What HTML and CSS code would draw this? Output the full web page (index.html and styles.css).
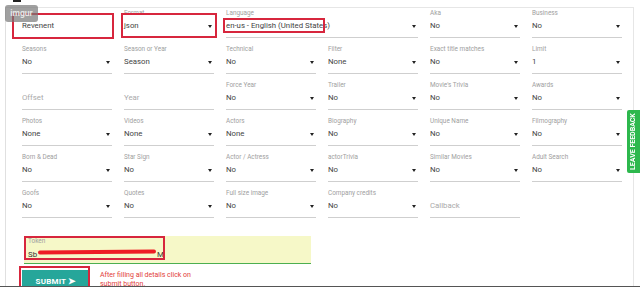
FILE: index.html
```html
<!DOCTYPE html>
<html lang="en">
<head>
    <meta charset="UTF-8">
    <meta name="viewport" content="width=device-width, initial-scale=1.0">
    <title>Movie API Form</title>
    <link rel="stylesheet" href="styles.css">
</head>
<body>
    <div class="topstub"></div>
    <div class="watermark">imgur</div>
    <div class="card">
        <div class="grid">
            <div class="field active"><label></label><div class="input">Revenent</div><span class="mark mark-title"></span></div>
            <div class="field"><label>Format</label><div class="input select">json<i></i></div><span class="mark mark-format"></span></div>
            <div class="field wide"><label>Language</label><div class="input select">en-us - English (United States)<i></i></div><span class="mark mark-lang"></span></div>
            <div class="field"><label>Aka</label><div class="input select">No<i></i></div></div>
            <div class="field"><label>Business</label><div class="input select">No<i></i></div></div>

            <div class="field"><label>Seasons</label><div class="input select">No<i></i></div></div>
            <div class="field"><label>Season or Year</label><div class="input select">Season<i></i></div></div>
            <div class="field"><label>Technical</label><div class="input select">No<i></i></div></div>
            <div class="field"><label>Filter</label><div class="input select">None<i></i></div></div>
            <div class="field"><label>Exact title matches</label><div class="input select">No<i></i></div></div>
            <div class="field"><label>Limit</label><div class="input select">1<i></i></div></div>

            <div class="field"><label></label><div class="input empty">Offset</div></div>
            <div class="field"><label></label><div class="input empty">Year</div></div>
            <div class="field"><label>Force Year</label><div class="input select">No<i></i></div></div>
            <div class="field"><label>Trailer</label><div class="input select">No<i></i></div></div>
            <div class="field"><label>Movie's Trivia</label><div class="input select">No<i></i></div></div>
            <div class="field"><label>Awards</label><div class="input select">No<i></i></div></div>

            <div class="field"><label>Photos</label><div class="input select">None<i></i></div></div>
            <div class="field"><label>Videos</label><div class="input select">None<i></i></div></div>
            <div class="field"><label>Actors</label><div class="input select">None<i></i></div></div>
            <div class="field"><label>Biography</label><div class="input select">No<i></i></div></div>
            <div class="field"><label>Unique Name</label><div class="input select">No<i></i></div></div>
            <div class="field"><label>Filmography</label><div class="input select">No<i></i></div></div>

            <div class="field"><label>Born &amp; Dead</label><div class="input select">No<i></i></div></div>
            <div class="field"><label>Star Sign</label><div class="input select">No<i></i></div></div>
            <div class="field"><label>Actor / Actress</label><div class="input select">No<i></i></div></div>
            <div class="field"><label>actorTrivia</label><div class="input select">No<i></i></div></div>
            <div class="field"><label>Similar Movies</label><div class="input select">No<i></i></div></div>
            <div class="field"><label>Adult Search</label><div class="input select">No<i></i></div></div>

            <div class="field"><label>Goofs</label><div class="input select">No<i></i></div></div>
            <div class="field"><label>Quotes</label><div class="input select">No<i></i></div></div>
            <div class="field"><label>Full size image</label><div class="input select">No<i></i></div></div>
            <div class="field"><label>Company credits</label><div class="input select">No<i></i></div></div>
            <div class="field"><label></label><div class="input empty">Callback</div></div>
        </div>

        <div class="token">
            <label>Token</label>
            <div class="input">Sb<span class="scribble"></span>M</div>
            <span class="mark mark-token"></span>
        </div>

        <div class="actions">
            <button class="submit">SUBMIT <span class="arrow">&#10148;</span><span class="mark mark-submit"></span></button>
            <p class="note">After filling all details click on<br>submit button.</p>
        </div>
    </div>
    <div class="feedback">LEAVE FEEDBACK</div>
    <div class="bottomline"></div>
</body>
</html>
```

FILE: styles.css
```css
*{
    margin: 0px;
    padding: 0px;
    box-sizing: border-box;
}
body{
    font-family: Roboto, "Liberation Sans", sans-serif;
    background: #fff;
    padding-top: 7px;
    height: 287px;
    overflow: hidden;
}
.topstub{
    position: absolute;
    left: 13px;
    top: 0;
    width: 8px;
    height: 2px;
    background: #222;
}
.watermark{
    position: absolute;
    left: 5px;
    top: 5px;
    width: 33px;
    height: 17px;
    border-radius: 3px;
    background: rgba(120,120,120,0.7);
    color: #e6e6e6;
    font-size: 8.5px;
    font-weight: bold;
    line-height: 17px;
    text-align: center;
    z-index: 3;
}
.card{
    margin-left: 5px;
    width: 629px;
    border-top: 1px solid #e6e6e6;
    border-left: 1px solid #e0e0e0;
    border-right: 1px solid #e6e6e6;
    height: 290px;
}
.grid{
    display: grid;
    grid-template-columns: repeat(6, 90px);
    column-gap: 12px;
    row-gap: 6px;
    padding-left: 16px;
}
.field{
    position: relative;
}
.field.wide{
    grid-column: span 2;
}
.field label, .token label{
    display: block;
    height: 10px;
    line-height: 10px;
    font-size: 6.4px;
    color: #a0a0a0;
}
.input{
    position: relative;
    height: 20px;
    line-height: 16px;
    padding-bottom: 3px;
    font-size: 7.8px;
    color: #444;
    border-bottom: 1px solid #cfcfcf;
}
.input.empty{
    color: #aaa;
}
.field.active .input{
    border-bottom-color: #9cc79a;
}
.select i{
    position: absolute;
    right: 2px;
    top: 7px;
    border-left: 2px solid transparent;
    border-right: 2px solid transparent;
    border-top: 3px solid #222;
}
.mark{
    position: absolute;
    border: 2px solid #d7263d;
    pointer-events: none;
}
.mark-title{ left: -10px; top: 5px; width: 102px; height: 26px; }
.mark-format{ left: -3px; top: 5px; width: 96px; height: 25px; }
.mark-lang{ left: -3px; top: 10px; width: 102px; height: 15px; }
.token{
    position: relative;
    margin: 18px 0 0 18px;
    width: 287px;
    padding-left: 4px;
    background: #f6f8c8;
}
.token .input{
    height: 18px;
    padding-bottom: 1px;
    line-height: 17px;
    border-bottom: 1px solid #4caf50;
    margin-left: -4px;
    padding-left: 4px;
    color: #333;
}
.scribble{
    display: inline-block;
    width: 118px;
    height: 4px;
    margin: 0 1px;
    vertical-align: 3px;
    background: #ee1c24;
    border-radius: 2px;
    transform: rotate(-0.6deg);
}
.mark-token{ left: 0; top: 0; width: 141px; height: 24px; }
.actions{
    display: flex;
    gap: 10px;
    margin: 6px 0 0 16px;
}
.submit{
    position: relative;
    width: 68px;
    height: 22px;
    border: none;
    background: #26a69a;
    color: #fff;
    font-family: Roboto, "Liberation Sans", sans-serif;
    font-size: 8px;
    font-weight: bold;
    letter-spacing: 0.2px;
}
.submit .arrow{
    font-size: 9px;
}
.mark-submit{ left: -3px; top: -4px; width: 71px; height: 25px; }
.note{
    font-size: 7px;
    line-height: 9px;
    color: #e2403a;
    padding-top: 1px;
}
.feedback{
    position: fixed;
    right: 0;
    top: 110px;
    width: 13px;
    height: 63px;
    background: #2db84d;
    color: #fff;
    font-size: 7px;
    font-weight: bold;
    writing-mode: vertical-rl;
    transform: rotate(180deg);
    text-align: center;
    line-height: 13px;
    border-radius: 0 2px 2px 0;
}
.bottomline{
    position: fixed;
    left: 0;
    right: 0;
    bottom: 0;
    height: 1px;
    background: #555;
}
```
